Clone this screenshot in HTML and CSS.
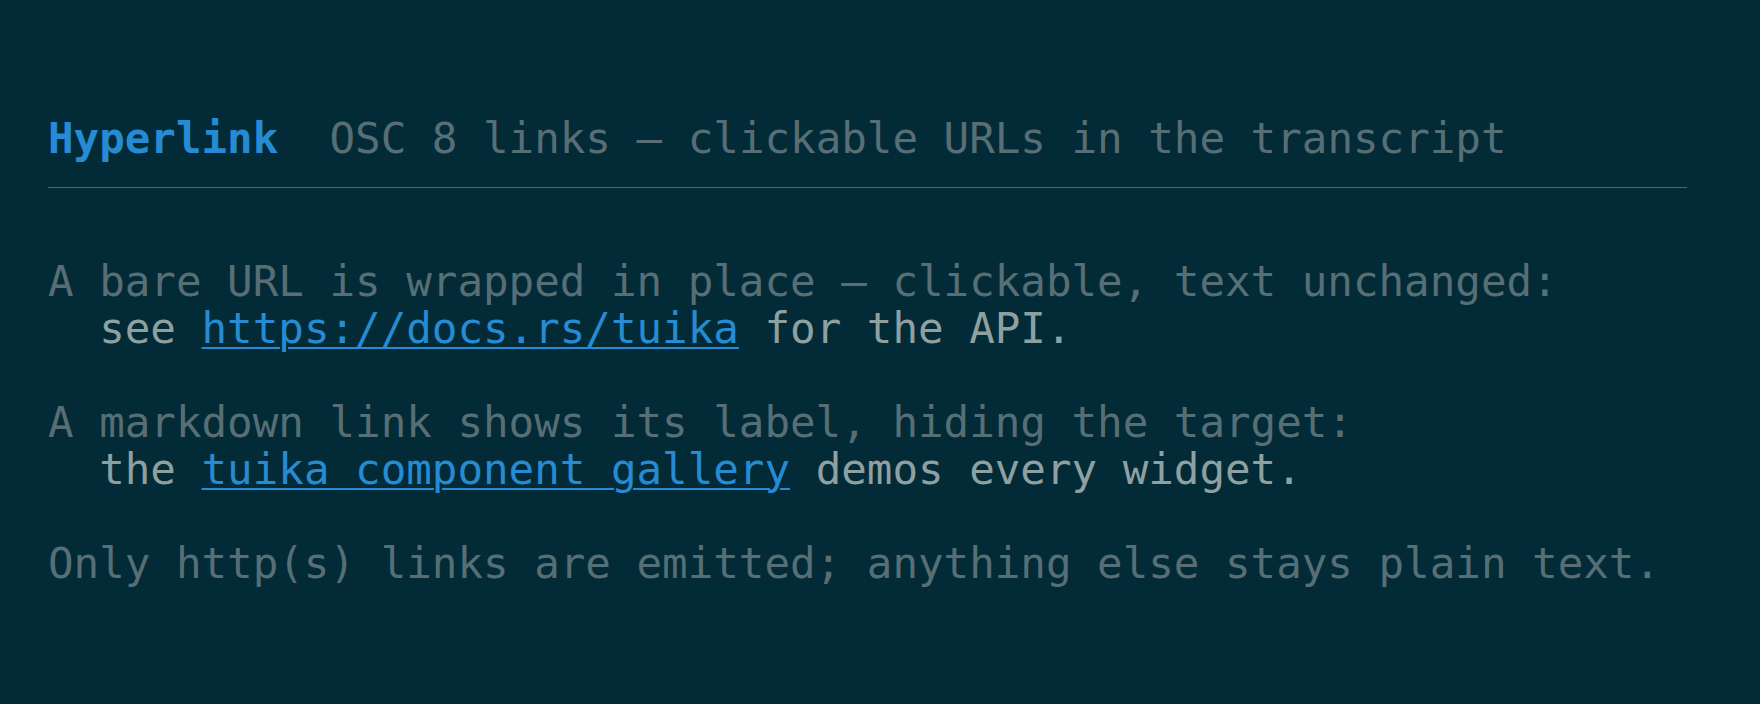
FILE: index.html
```html
<!DOCTYPE html>
<html lang="en">
<head>
<meta charset="utf-8">
<title>Hyperlink</title>
<link rel="stylesheet" href="styles.css">
</head>
<body>
<main class="panel">
  <header class="head"><span class="name">Hyperlink</span>  <span class="desc">OSC 8 links — clickable URLs in the transcript</span></header>
  <section class="transcript">
    <div class="line dim">A bare URL is wrapped in place — clickable, text unchanged:</div>
    <div class="line text">  see <a class="link" href="https://docs.rs/tuika">https://docs.rs/tuika</a> for the API.</div>
    <div class="line blank"> </div>
    <div class="line dim">A markdown link shows its label, hiding the target:</div>
    <div class="line text">  the <a class="link" href="https://docs.rs/tuika">tuika component gallery</a> demos every widget.</div>
    <div class="line blank"> </div>
    <div class="line dim">Only http(s) links are emitted; anything else stays plain text.</div>
  </section>
</main>
</body>
</html>
```

FILE: styles.css
```css
html, body {
  margin: 0;
  padding: 0;
  background: #022b37;
}
body {
  width: 1760px;
  height: 704px;
  overflow: hidden;
  font-family: "DejaVu Sans Mono", "Liberation Mono", monospace;
  font-size: 42.5px;
  line-height: 47px;
}
.panel {
  padding: 115px 73px 0 48px;
}
.head {
  white-space: pre;
  height: 47px;
  padding-bottom: 25px;
  border-bottom: 1px solid #4d6870;
}
.name {
  color: #268bd2;
  font-weight: bold;
}
.desc {
  color: #586e75;
}
.transcript {
  margin-top: 70px;
}
.line {
  white-space: pre;
  height: 47px;
}
.dim {
  color: #586e75;
}
.text {
  color: #8fa0a1;
}
.link {
  color: #268bd2;
  text-decoration: underline;
  text-decoration-thickness: 2px;
  text-underline-offset: 4px;
}
```
